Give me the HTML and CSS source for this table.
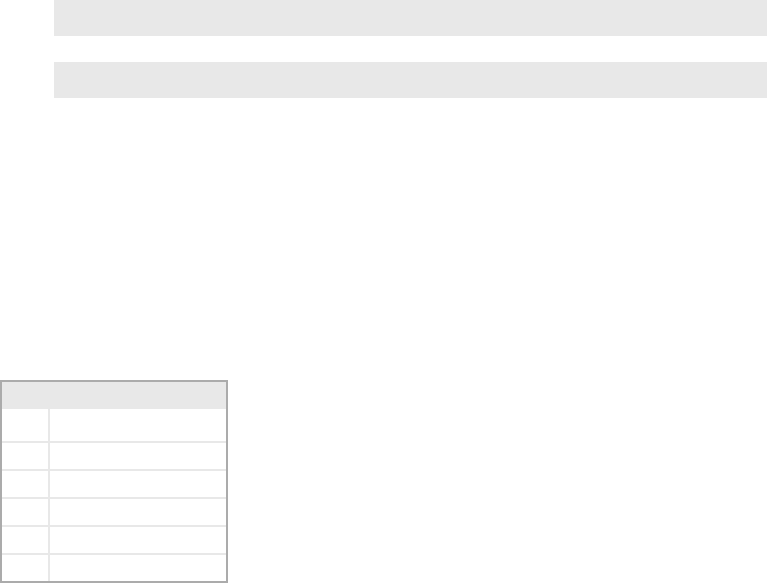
FILE: index.html
```html
<!DOCTYPE html>
<html lang="en">
<head>
  <meta charset="UTF-8" />
  <meta name="viewport" content="width=device-width, initial-scale=1" />
  <title>Loading</title>
  <link rel="stylesheet" href="styles.css">
</head>
<body>

  <!-- Placeholder bars -->
  <section class="bars" aria-hidden="true">
    <div class="bar"></div>
    <div class="bar"></div>
  </section>

  <!-- Placeholder table -->
  <section class="sheet" aria-hidden="true">
    <div class="sheet-head"></div>
    <div class="sheet-body">
      <div class="sheet-row tall"><span></span><span></span></div>
      <div class="sheet-row"><span></span><span></span></div>
      <div class="sheet-row"><span></span><span></span></div>
      <div class="sheet-row"><span></span><span></span></div>
      <div class="sheet-row"><span></span><span></span></div>
      <div class="sheet-row"><span></span><span></span></div>
    </div>
  </section>

</body>
</html>
```

FILE: styles.css
```css
/* Base */
body {
  margin: 0;
  font-family: 'Liberation Sans', Arial, sans-serif;
  background: #fff;
}

/* Top bars */
.bars {
  display: flex;
  flex-direction: column;
  gap: 26px;
  padding-left: 54px;
}

.bar {
  height: 36px;
  background-color: #e8e8e8;
}

/* Table skeleton */
.sheet {
  margin-top: 282px;
  width: 228px;
  height: 203px;
  box-sizing: border-box;
  border: 2px solid #ababab;
  display: flex;
  flex-direction: column;
}

.sheet-head {
  height: 27px;
  background-color: #e8e8e8;
}

.sheet-body {
  flex: 1;
  display: flex;
  flex-direction: column;
  gap: 2px;
  background-color: #e8e8e8;
}

.sheet-row {
  height: 26px;
  display: grid;
  grid-template-columns: 46px 1fr;
  gap: 2px;
}

.sheet-row.tall {
  height: 32px;
}

.sheet-row span {
  background-color: #fff;
}
```
